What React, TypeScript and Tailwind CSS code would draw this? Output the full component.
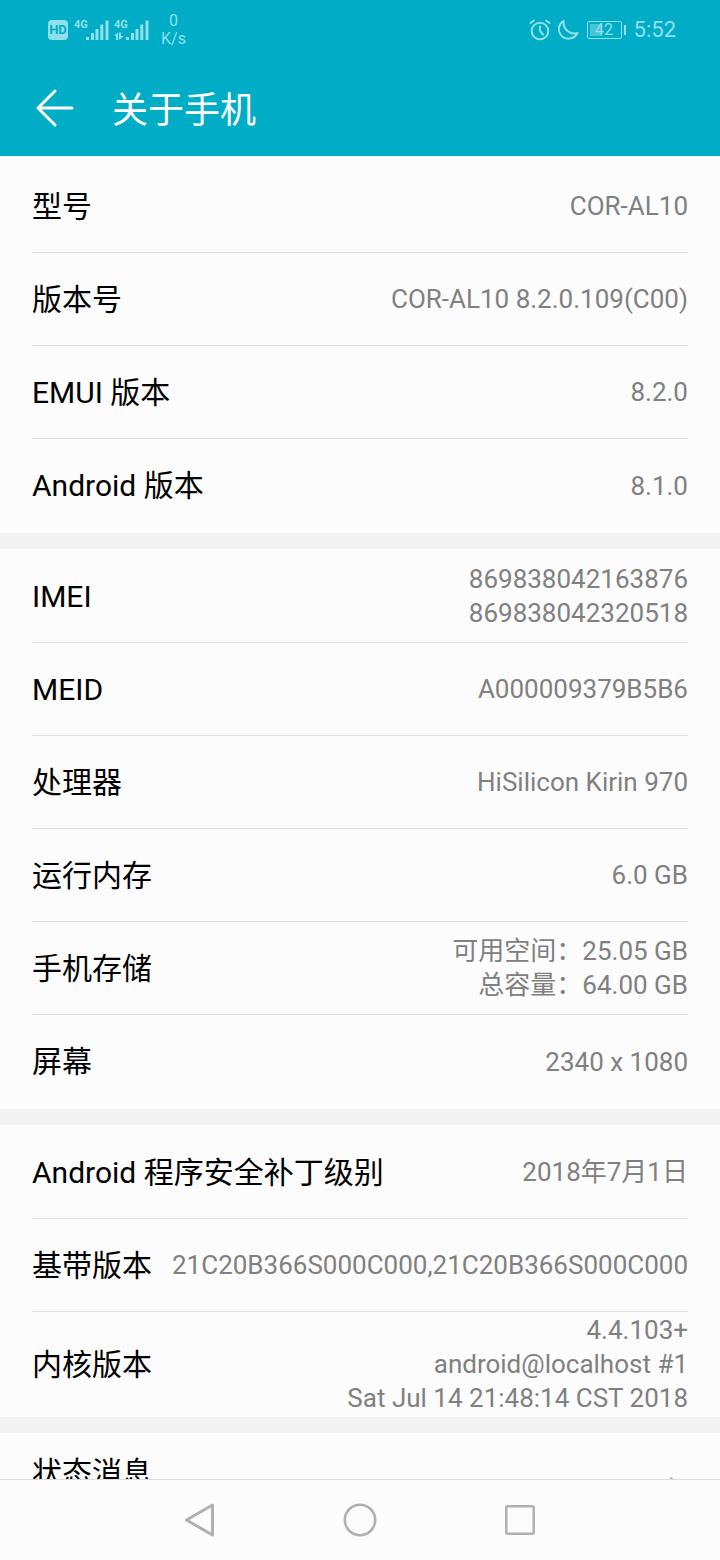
import type { ReactNode } from "react";

type Item = { label: string; value: string[] };

const groups: Item[][] = [
  [
    { label: "型号", value: ["COR-AL10"] },
    { label: "版本号", value: ["COR-AL10 8.2.0.109(C00)"] },
    { label: "EMUI 版本", value: ["8.2.0"] },
    { label: "Android 版本", value: ["8.1.0"] },
  ],
  [
    { label: "IMEI", value: ["869838042163876", "869838042320518"] },
    { label: "MEID", value: ["A000009379B5B6"] },
    { label: "处理器", value: ["HiSilicon Kirin 970"] },
    { label: "运行内存", value: ["6.0 GB"] },
    { label: "手机存储", value: ["可用空间：25.05 GB", "总容量：64.00 GB"] },
    { label: "屏幕", value: ["2340 x 1080"] },
  ],
  [
    { label: "Android 程序安全补丁级别", value: ["2018年7月1日"] },
    { label: "基带版本", value: ["21C20B366S000C000,21C20B366S000C000"] },
    { label: "内核版本", value: ["4.4.103+", "android@localhost #1", "Sat Jul 14 21:48:14 CST 2018"] },
  ],
];

function SignalBars({ data = false }: { data?: boolean }) {
  return (
    <div className="relative h-6 w-9">
      <span className="absolute top-0 left-0 text-[11px] leading-[14px] font-bold">4G</span>
      <svg viewBox="0 0 36 24" className="h-6 w-9" fill="currentColor" aria-hidden="true">
        {data && <path d="M0 18l4-3.500v7.500H2V18zM5 14.500h2V18h3l-5 4z" />}
        <path d="M12 19h3v3h-3zM17 15h3v7h-3zM21.500 11h3v11h-3zM26.300 6.500h3V22h-3zM31.500 2.500h3V22h-3z" />
      </svg>
    </div>
  );
}

function StatusBar() {
  return (
    <div className="flex h-[60px] items-center justify-between pr-11 pl-12 text-[#8fe0ea]">
      <div className="flex items-center">
        <span className="mr-1.5 flex h-5 w-5 items-center justify-center rounded-sm bg-[#8fe0ea] text-[13px] font-bold text-[#00acc6]">
          HD
        </span>
        <SignalBars />
        <span className="w-1" />
        <SignalBars data />
        <div className="ml-[11px] text-center text-[16px] leading-[18px]">
          <div>0</div>
          <div>K/s</div>
        </div>
      </div>
      <div className="flex items-center gap-2">
        <div className="flex items-center gap-1.5">
          <svg viewBox="0 0 22 22" className="h-[22px] w-[22px]" fill="none" stroke="currentColor" strokeWidth="2" strokeLinecap="round" aria-label="闹钟">
            <circle cx="11" cy="12" r="8.3" />
            <path d="M11 7.5V12l3 3.5M1.5 4L5 1.5M20.500 4L17 1.500" />
          </svg>
          <svg viewBox="0 0 22 22" className="h-[22px] w-[22px]" fill="none" stroke="currentColor" strokeWidth="2" strokeLinejoin="round" aria-label="勿扰">
            <path d="M6.5 2C1.5 5 0.5 11 3.5 15.5c4 6 13.5 5.500 17-1.500C12 16 6 10 6.500 2z" />
          </svg>
        </div>
        <div className="flex items-center gap-0.5">
          <div className="relative flex h-[18px] w-[35px] items-center justify-center rounded-xs border border-current">
            <span className="absolute inset-y-0.5 left-0.5 w-3 bg-[#8fe0ea]/50" />
            <span className="relative text-[16px] leading-4">42</span>
          </div>
          <span className="h-2.5 w-0.5 bg-current" />
        </div>
        <span className="text-[22px] leading-6">5:52</span>
      </div>
    </div>
  );
}

function Group({ children }: { children: ReactNode }) {
  return <dl className="bg-[#fcfcfc] px-8 py-px">{children}</dl>;
}

function Row({ label, value }: Item) {
  return (
    <div className="flex min-h-[93px] items-center justify-between gap-5 border-b border-[#dfdfdf] last:border-b-0">
      <dt className="shrink-0 pt-px text-[30px] leading-10 text-black">{label}</dt>
      <dd className="py-px text-right text-[26px] leading-[34px] text-[#808080]">
        {value.map((line) => (
          <div key={line}>{line}</div>
        ))}
      </dd>
    </div>
  );
}

export default function App() {
  return (
    <div className="flex h-screen flex-col bg-[#fcfcfc] font-['Roboto','Noto_Sans_CJK_SC',sans-serif]">
      <header className="shrink-0 bg-[#00acc6]">
        <StatusBar />
        <div className="flex h-24 items-center gap-[38px] px-9 text-white">
          <button type="button" aria-label="返回">
            <svg viewBox="0 0 38 38" className="h-[38px] w-[38px]" fill="none" stroke="currentColor" strokeWidth="3" strokeLinecap="round" strokeLinejoin="round">
              <path d="M36 19H2M19 2L2 19l17 17" />
            </svg>
          </button>
          <h1 className="pt-1.5 text-[36px] leading-10 font-normal">关于手机</h1>
        </div>
      </header>

      <main className="flex min-h-0 flex-1 flex-col overflow-y-auto pt-[3px] [scrollbar-width:none]">
        <div className="flex flex-col gap-4 bg-[#f3f3f3]">
          {groups.map((items) => (
            <Group key={items[0].label}>
              {items.map((item) => (
                <Row key={item.label} {...item} />
              ))}
            </Group>
          ))}
          <a href="#status" className="flex min-h-[108px] items-center justify-between bg-[#fcfcfc] px-8 text-[30px] leading-10 text-black">
            <span className="self-start pt-5">状态消息</span>
            <svg viewBox="0 0 20 24" className="h-6 w-5" fill="none" stroke="#b0b0b0" strokeWidth="2" aria-hidden="true">
              <path d="M2.5 2.5l9.500 9.500-9.500 9.500" />
            </svg>
          </a>
        </div>
      </main>

      <nav className="flex h-[81px] shrink-0 items-center justify-center border-t border-[#dcdcdc] bg-[#fcfcfc] text-[#b0b0b0]">
        <button type="button" aria-label="返回" className="flex w-40 justify-center">
          <svg viewBox="0 0 34 34" className="h-[34px] w-[34px]" fill="none" stroke="currentColor" strokeWidth="3" strokeLinejoin="round">
            <path d="M29.500 2v30L3.500 17z" />
          </svg>
        </button>
        <button type="button" aria-label="主屏幕" className="flex w-40 justify-center">
          <svg viewBox="0 0 34 34" className="h-[34px] w-[34px]" fill="none" stroke="currentColor" strokeWidth="2.5">
            <circle cx="17" cy="17" r="15.2" />
          </svg>
        </button>
        <button type="button" aria-label="最近任务" className="flex w-40 justify-center">
          <svg viewBox="0 0 34 34" className="h-[34px] w-[34px]" fill="none" stroke="currentColor" strokeWidth="2.5">
            <rect x="3.3" y="3.3" width="27.4" height="27.4" rx="1.5" />
          </svg>
        </button>
      </nav>
    </div>
  );
}
